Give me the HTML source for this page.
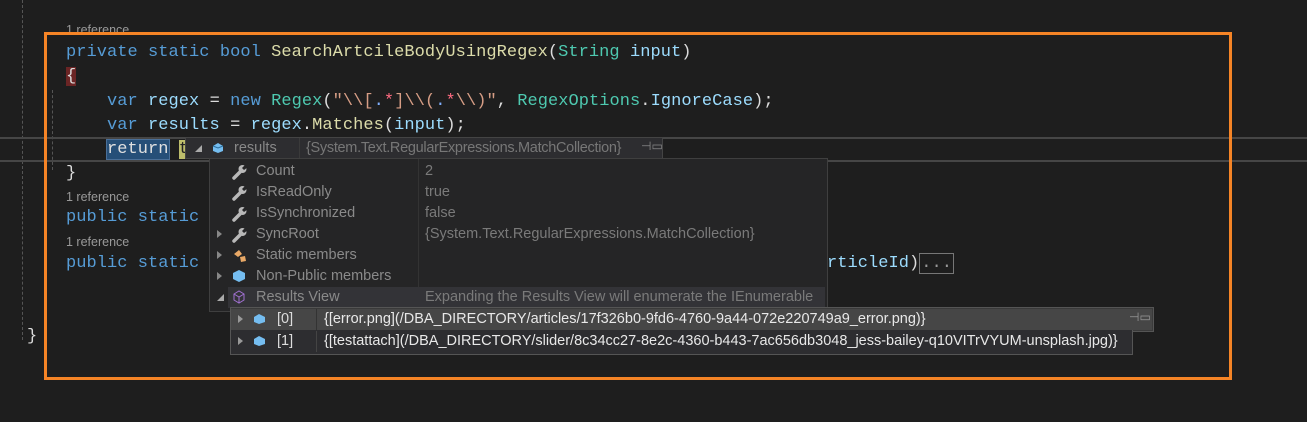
<!DOCTYPE html>
<html><head><meta charset="utf-8"><style>
*{margin:0;padding:0;box-sizing:border-box}
body{width:1307px;height:422px;background:#1e1e1e;position:relative;overflow:hidden;font-family:"Liberation Mono",monospace}
.c{position:absolute;font-size:17px;letter-spacing:0.05px;white-space:pre;color:#dcdcdc;line-height:22px}
.k{color:#569cd6}.m{color:#dcdcaa}.t{color:#4ec9b0}.v{color:#9cdcfe}.s{color:#d69d85}.r{color:#ff6b81}.d{color:#80b0ff}
.ref{position:absolute;font-family:"Liberation Sans",sans-serif;font-size:12.5px;color:#999;white-space:pre}
.ui{font-family:"Liberation Sans",sans-serif;font-size:14.5px;letter-spacing:0;white-space:pre;position:absolute}
.row{position:absolute;left:0;height:21px;width:100%}
.n{position:absolute;left:46px;top:2px;color:#8a8a8a}
.val{position:absolute;left:215px;top:2px;color:#7a7a7a}
.ic{position:absolute;left:22px;top:3px}
.tri{position:absolute;left:7px;top:6px;width:0;height:0;border-left:5px solid #888;border-top:4px solid transparent;border-bottom:4px solid transparent}
.open{position:absolute;width:0;height:0;border-bottom:7px solid #aaa;border-left:7px solid transparent}
</style></head><body>
<div style="position:absolute;left:22px;top:0;height:340px;border-left:1px dashed #555"></div>
<div style="position:absolute;left:52px;top:90px;height:80px;border-left:1px dashed #555"></div>
<div style="position:absolute;left:0;top:137px;width:1307px;height:2px;background:#464646"></div>
<div style="position:absolute;left:0;top:160px;width:1307px;height:2px;background:#464646"></div>

<div class="ref" style="left:66px;top:23px">1 reference</div>
<div class="c" style="left:66px;top:42px"><span class="k">private</span> <span class="k">static</span> <span class="k">bool</span> <span class="m">SearchArtcileBodyUsingRegex</span>(<span class="t">String</span> <span class="v">input</span>)</div>
<div class="c" style="left:66px;top:66px"><span style="background:#6b2525">{</span></div>
<div class="c" style="left:66px;top:91px">    <span class="k">var</span> <span class="v">regex</span> = <span class="k">new</span> <span class="t">Regex</span>(<span class="s">"\\[</span><span class="d">.</span><span class="r">*</span><span class="s">]\\(</span><span class="d">.</span><span class="r">*</span><span class="s">\\)"</span>, <span class="t">RegexOptions</span>.<span class="v">IgnoreCase</span>);</div>
<div class="c" style="left:66px;top:115px">    <span class="k">var</span> <span class="v">results</span> = <span class="v">regex</span>.<span class="m">Matches</span>(<span class="v">input</span>);</div>
<div class="c" style="left:66px;top:139px">    <span style="background:#264f78;color:#e0e0e0;outline:1px solid #4a6f98">return</span> <span style="background:#bdbd6b;color:#222">t  </span></div>
<div class="c" style="left:66px;top:163px">}</div>
<div class="ref" style="left:66px;top:190px">1 reference</div>
<div class="c" style="left:66px;top:207px"><span class="k">public</span> <span class="k">static</span></div>
<div class="ref" style="left:66px;top:235px">1 reference</div>
<div class="c" style="left:66px;top:253px"><span class="k">public</span> <span class="k">static</span></div>
<div class="c" style="left:827px;top:253px"><span class="v">rticleId</span>)<span style="border:1px solid #777;color:#999;padding:0 1px">...</span></div>
<div class="c" style="left:27px;top:326px">}</div>

<div style="position:absolute;left:44px;top:32px;width:1188px;height:348px;border:3px solid #f58426"></div>

<svg width="0" height="0" style="position:absolute"><defs><symbol id="w" viewBox="0 0 16 16"><path d="M2 14 L8 8" stroke="#b8b8b8" stroke-width="3.5" stroke-linecap="round"/><circle cx="10.5" cy="5" r="4" fill="#b8b8b8"/><path d="M10 4 L13 1 L16 1 L16 3 L12 6Z" fill="#252526"/></symbol></defs></svg>

<!-- header tooltip -->
<div style="position:absolute;left:185px;top:137px;width:478px;height:22px;background:#2d2d30;border:1px solid #444">
 <div class="open" style="left:9px;top:7px"></div>
 <svg style="position:absolute;left:26px;top:4px" width="12" height="12"><path d="M1 4 L6 1 L11 4 L11 9 L6 11 L1 9Z" fill="#75bdf0"/><path d="M1 4 L6 6 L11 4" stroke="#2a6f9f" fill="none"/></svg>
 <span class="ui" style="left:48px;top:2px;color:#888">results</span>
 <div style="position:absolute;left:113px;top:0;width:1px;height:20px;background:#3a3a3a"></div>
 <span class="ui" style="left:120px;top:2px;color:#777;letter-spacing:-0.3px">{System.Text.RegularExpressions.MatchCollection}</span>
 <span class="ui" style="left:455px;top:1px;color:#888;font-size:12px">⊣▭</span>
</div>
<!-- main popup -->
<div style="position:absolute;left:209px;top:158px;width:619px;height:154px;background:#252526;border:1px solid #3f3f3f">
 <div style="position:absolute;left:208px;top:0;width:1px;height:150px;background:#333"></div>
 <div class="row" style="top:2px"><svg class="ic" width="16" height="16"><use href="#w"/></svg><span class="ui n">Count</span><span class="ui val">2</span></div>
 <div class="row" style="top:23px"><svg class="ic" width="16" height="16"><use href="#w"/></svg><span class="ui n">IsReadOnly</span><span class="ui val">true</span></div>
 <div class="row" style="top:44px"><svg class="ic" width="16" height="16"><use href="#w"/></svg><span class="ui n">IsSynchronized</span><span class="ui val">false</span></div>
 <div class="row" style="top:65px"><div class="tri"></div><svg class="ic" width="16" height="16"><use href="#w"/></svg><span class="ui n">SyncRoot</span><span class="ui val">{System.Text.RegularExpressions.MatchCollection}</span></div>
 <div class="row" style="top:86px"><div class="tri"></div><svg class="ic" width="16" height="16"><path d="M2 6 L7 2 L10 6 L6 9Z M8 9 L13 8 L14 13 L9 14Z" fill="#e8a866"/></svg><span class="ui n">Static members</span></div>
 <div class="row" style="top:107px"><div class="tri"></div><svg class="ic" width="14" height="14"><path d="M1 4 L7 1 L13 4 L13 10 L7 13 L1 10Z" fill="#75bdf0"/></svg><span class="ui n">Non-Public members</span></div>
 <div class="row" style="top:128px;left:18px;width:597px;background:#333337"><div class="open" style="left:-11px;top:7px"></div><svg style="position:absolute;left:4px;top:3px" width="14" height="14"><path d="M2 4 L7 1 L12 4 L12 10 L7 13 L2 10Z M2 4 L7 7 L12 4 M7 7 L7 13" stroke="#a070d0" fill="none"/></svg><span class="ui" style="left:28px;top:2px;color:#8a8a8a">Results View</span><span class="ui" style="left:197px;top:2px;color:#7a7a7a">Expanding the Results View will enumerate the IEnumerable</span></div>
</div>
<!-- sub popup -->
<div style="position:absolute;left:230px;top:307px;width:924px;height:25px;background:#3a3a3a;border:1px solid #555"></div>
<div style="position:absolute;left:230px;top:330px;width:903px;height:25px;background:#2d2d30;border:1px solid #555;border-top:none"></div>
<div style="position:absolute;left:231px;top:308px;width:922px;height:45px">
 <div class="row" style="top:1px;height:21px;width:921px;background:#464646">
  <div class="tri" style="left:7px;border-left-color:#999"></div>
  <svg style="position:absolute;left:22px;top:4px" width="13" height="12"><path d="M1 4 L6 1 L12 4 L12 9 L6 11 L1 9Z" fill="#75bdf0"/></svg>
  <span class="ui" style="left:46px;top:2px;color:#ddd">[0]</span>
  <div style="position:absolute;left:85px;top:0;width:1px;height:21px;background:#333"></div>
  <span class="ui" style="left:93px;top:2px;color:#e8e8e8">{[error.png](/DBA_DIRECTORY/articles/17f326b0-9fd6-4760-9a44-072e220749a9_error.png)}</span>
  <span class="ui" style="left:898px;top:1px;color:#999;font-size:12px">⊣▭</span>
 </div>
 <div class="row" style="top:23px;height:21px;width:900px;background:#2d2d30">
  <div class="tri" style="left:7px;border-left-color:#999"></div>
  <svg style="position:absolute;left:22px;top:4px" width="13" height="12"><path d="M1 4 L6 1 L12 4 L12 9 L6 11 L1 9Z" fill="#75bdf0"/></svg>
  <span class="ui" style="left:46px;top:2px;color:#ddd">[1]</span>
  <div style="position:absolute;left:85px;top:0;width:1px;height:21px;background:#444"></div>
  <span class="ui" style="left:93px;top:2px;color:#e8e8e8">{[testattach](/DBA_DIRECTORY/slider/8c34cc27-8e2c-4360-b443-7ac656db3048_jess-bailey-q10VITrVYUM-unsplash.jpg)}</span>
 </div>
</div>
</body></html>
